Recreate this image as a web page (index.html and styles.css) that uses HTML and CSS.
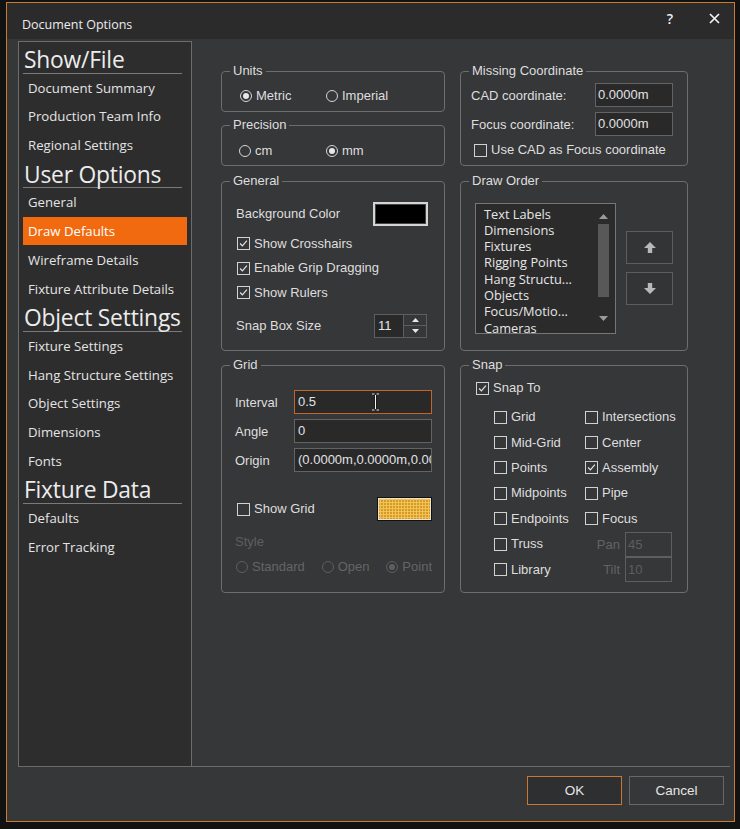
FILE: index.html
```html
<!DOCTYPE html>
<html>
<head>
<meta charset="utf-8">
<link rel="stylesheet" href="styles.css">
</head>
<body>
<div class="window">
  <div class="titlebar">
    <div class="title">Document Options</div>
    <div class="tb-btns">
      <span class="help">?</span>
      <svg class="close" width="11" height="11" viewBox="0 0 11 11"><path d="M1 1L10 10M10 1L1 10" stroke="#f2f2f2" stroke-width="1.7" fill="none"/></svg>
    </div>
  </div>

  <div class="main">
    <nav class="sidebar">
      <div class="sb-head">Show/File</div>
      <div class="sb-item">Document Summary</div>
      <div class="sb-item">Production Team Info</div>
      <div class="sb-item">Regional Settings</div>
      <div class="sb-head">User Options</div>
      <div class="sb-item">General</div>
      <div class="sb-item active">Draw Defaults</div>
      <div class="sb-item">Wireframe Details</div>
      <div class="sb-item">Fixture Attribute Details</div>
      <div class="sb-head">Object Settings</div>
      <div class="sb-item">Fixture Settings</div>
      <div class="sb-item">Hang Structure Settings</div>
      <div class="sb-item">Object Settings</div>
      <div class="sb-item">Dimensions</div>
      <div class="sb-item">Fonts</div>
      <div class="sb-head">Fixture Data</div>
      <div class="sb-item">Defaults</div>
      <div class="sb-item">Error Tracking</div>
    </nav>

    <section class="panel">
      <div class="col-stack">
        <div class="group g-units">
          <div class="gt">Units</div>
          <div class="radio-row units-row">
            <label class="radio w86"><span class="rb on"></span>Metric</label>
            <label class="radio"><span class="rb"></span>Imperial</label>
          </div>
        </div>
        <div class="group g-units">
          <div class="gt">Precision</div>
          <div class="radio-row prec-row">
            <label class="radio w87"><span class="rb"></span>cm</label>
            <label class="radio"><span class="rb on"></span>mm</label>
          </div>
        </div>
      </div>

      <div class="group">
        <div class="gt">Missing Coordinate</div>
        <div class="mc-body">
          <div class="field-row"><span>CAD coordinate:</span><span class="tb w78">0.0000m</span></div>
          <div class="field-row mt5"><span>Focus coordinate:</span><span class="tb w78">0.0000m</span></div>
          <label class="check mc-check"><span class="cb"></span>Use CAD as Focus coordinate</label>
        </div>
      </div>

      <div class="group">
        <div class="gt">General</div>
        <div class="gen-body">
          <div class="bg-row"><span>Background Color</span><span class="swatch-black"></span></div>
          <div class="gen-checks">
            <label class="check crow"><span class="cb on"><svg viewBox="0 0 13 13"><path d="M2.5 6.5L5.2 9.3L10.5 3.2" stroke="#e6e6e6" stroke-width="1.4" fill="none"/></svg></span>Show Crosshairs</label>
            <label class="check crow"><span class="cb on"><svg viewBox="0 0 13 13"><path d="M2.5 6.5L5.2 9.3L10.5 3.2" stroke="#e6e6e6" stroke-width="1.4" fill="none"/></svg></span>Enable Grip Dragging</label>
            <label class="check crow"><span class="cb on"><svg viewBox="0 0 13 13"><path d="M2.5 6.5L5.2 9.3L10.5 3.2" stroke="#e6e6e6" stroke-width="1.4" fill="none"/></svg></span>Show Rulers</label>
          </div>
          <div class="snapbox-row">
            <span>Snap Box Size</span>
            <div class="spinner">
              <span class="spin-val">11</span>
              <span class="spin-btns">
                <span class="spin-b"><svg width="7" height="4" viewBox="0 0 7 4"><path d="M0 4L3.5 0L7 4Z" fill="#e8e8e8"/></svg></span>
                <span class="spin-b"><svg width="7" height="4" viewBox="0 0 7 4"><path d="M0 0L3.5 4L7 0Z" fill="#e8e8e8"/></svg></span>
              </span>
            </div>
          </div>
        </div>
      </div>

      <div class="group">
        <div class="gt">Draw Order</div>
        <div class="do-body">
          <div class="listbox">
            <div class="lb-items">
              <div>Text Labels</div>
              <div>Dimensions</div>
              <div>Fixtures</div>
              <div>Rigging Points</div>
              <div>Hang Structu...</div>
              <div>Objects</div>
              <div>Focus/Motio...</div>
              <div>Cameras</div>
            </div>
            <div class="scroll">
              <svg width="9" height="5" viewBox="0 0 9 5"><path d="M0 5L4.5 0L9 5Z" fill="#9a9a9a"/></svg>
              <div class="thumb"></div>
              <svg width="9" height="5" viewBox="0 0 9 5"><path d="M0 0L4.5 5L9 0Z" fill="#9a9a9a"/></svg>
            </div>
          </div>
          <div class="order-btns">
            <div class="obtn"><svg width="12" height="11" viewBox="0 0 12 11"><path d="M6 0L12 6H8.2V11H3.8V6H0Z" fill="#b8b8b8"/></svg></div>
            <div class="obtn"><svg width="12" height="11" viewBox="0 0 12 11"><path d="M6 11L12 5H8.2V0H3.8V5H0Z" fill="#b8b8b8"/></svg></div>
          </div>
        </div>
      </div>

      <div class="group">
        <div class="gt">Grid</div>
        <div class="grid-body">
          <div class="gfield"><span class="glabel">Interval</span><span class="tb gtb focus">0.5<svg class="ibeam" width="9" height="18" viewBox="0 0 9 18"><path d="M1 1H3.5M5.5 1H8M4.5 2V16M1 17H3.5M5.5 17H8" stroke="#111" stroke-width="2.2" fill="none"/><path d="M1 1H3.5M5.5 1H8M4.5 2V16M1 17H3.5M5.5 17H8" stroke="#f4f4f4" stroke-width="1" fill="none"/></svg></span></div>
          <div class="gfield"><span class="glabel">Angle</span><span class="tb gtb">0</span></div>
          <div class="gfield"><span class="glabel">Origin</span><span class="tb gtb clip">(0.0000m,0.0000m,0.0000m)</span></div>
          <div class="showgrid-row">
            <label class="check"><span class="cb"></span>Show Grid</label>
            <span class="swatch-grid"></span>
          </div>
          <div class="style-label">Style</div>
          <div class="radio-row style-row">
            <label class="radio dis w86"><span class="rb"></span>Standard</label>
            <label class="radio dis w65"><span class="rb"></span>Open</label>
            <label class="radio dis"><span class="rb on"></span>Point</label>
          </div>
        </div>
      </div>

      <div class="group">
        <div class="gt">Snap</div>
        <div class="snap-body">
          <label class="check snapto"><span class="cb on"><svg viewBox="0 0 13 13"><path d="M2.5 6.5L5.2 9.3L10.5 3.2" stroke="#e6e6e6" stroke-width="1.4" fill="none"/></svg></span>Snap To</label>
          <div class="snap-grid">
            <label class="check"><span class="cb"></span>Grid</label>
            <label class="check"><span class="cb"></span>Intersections</label>
            <label class="check"><span class="cb"></span>Mid-Grid</label>
            <label class="check"><span class="cb"></span>Center</label>
            <label class="check"><span class="cb"></span>Points</label>
            <label class="check"><span class="cb on"><svg viewBox="0 0 13 13"><path d="M2.5 6.5L5.2 9.3L10.5 3.2" stroke="#e6e6e6" stroke-width="1.4" fill="none"/></svg></span>Assembly</label>
            <label class="check"><span class="cb"></span>Midpoints</label>
            <label class="check"><span class="cb"></span>Pipe</label>
            <label class="check"><span class="cb"></span>Endpoints</label>
            <label class="check"><span class="cb"></span>Focus</label>
            <label class="check"><span class="cb"></span>Truss</label>
            <div class="pt-row"><span class="dis-text">Pan</span><span class="tb ptb">45</span></div>
            <label class="check"><span class="cb"></span>Library</label>
            <div class="pt-row"><span class="dis-text">Tilt</span><span class="tb ptb">10</span></div>
          </div>
        </div>
      </div>
    </section>
  </div>

  <div class="footer">
    <div class="btn ok">OK</div>
    <div class="btn">Cancel</div>
  </div>
</div>
</body>
</html>
```

FILE: styles.css
```css
html, body {
  margin: 0;
  padding: 0;
}
body {
  background: #121212;
  width: 740px;
  height: 829px;
  overflow: hidden;
  font-family: "Liberation Sans", Arial, sans-serif;
  font-size: 13px;
  color: #dedede;
}
.window {
  margin: 2px 0 0 6px;
  width: 729px;
  height: 820px;
  box-sizing: border-box;
  border: 1px solid #c97b2f;
  background: #363739;
  display: flex;
  flex-direction: column;
}
.titlebar {
  height: 36px;
  flex: none;
  background: #2b2b2c;
  display: flex;
  justify-content: space-between;
  align-items: flex-start;
}
.title {
  font-family: "Open Sans", sans-serif;
  font-size: 12.5px;
  font-weight: 500;
  color: #ececec;
  margin: 13px 0 0 15px;
  line-height: 18px;
}
.tb-btns {
  display: flex;
  align-items: center;
  margin: 6px 14px 0 0;
  height: 18px;
}
.help {
  font-family: "Open Sans", sans-serif;
  font-size: 14px;
  font-weight: 600;
  color: #f0f0f0;
  margin-right: 36px;
}
.main {
  flex: none;
  height: 726px;
  box-sizing: border-box;
  margin: 2px 4px 0 11px;
  border-bottom: 1px solid #6a6a6a;
  display: flex;
}
.sidebar {
  width: 174px;
  flex: none;
  box-sizing: border-box;
  border: 1px solid #6c6c6c;
  border-bottom: none;
  background: #2d2d2e;
  padding-top: 3px;
  font-family: "Open Sans", sans-serif;
}
.sb-head {
  height: 28.7px;
  box-sizing: border-box;
  margin: 0 9px 0 4px;
  padding-left: 1px;
  border-bottom: 1px solid #7a7a7a;
  font-size: 22.8px;
  font-weight: 400;
  line-height: 29px;
  color: #ececec;
  letter-spacing: -0.2px;
  white-space: nowrap;
  overflow: visible;
}
.sb-item {
  height: 28.7px;
  box-sizing: border-box;
  margin: 0 4px;
  padding-left: 5px;
  font-size: 13.2px;
  font-weight: 500;
  line-height: 28.7px;
  color: #e4e4e4;
  white-space: nowrap;
}
.sb-item.active {
  background: #f26a10;
  color: #fff;
  height: 28px;
  line-height: 28px;
  margin-bottom: 0.7px;
}
.panel {
  flex: 1;
  padding: 30px 0 0 29px;
  display: grid;
  grid-template-columns: 224px 228px;
  grid-template-rows: 95px 170px 228px;
  column-gap: 15px;
  row-gap: 14.5px;
  align-content: start;
}
.col-stack {
  display: flex;
  flex-direction: column;
  gap: 13px;
}
.group {
  border: 1px solid #6d6d6d;
  border-radius: 4px;
  box-sizing: border-box;
}
.g-units {
  height: 41px;
}
.gt {
  margin: -8px 0 0 8px;
  padding: 0 3px;
  width: fit-content;
  height: 14px;
  line-height: 14px;
  background: #363739;
  color: #dedede;
}
.radio-row {
  display: flex;
  align-items: center;
  height: 16px;
}
.units-row { margin-top: 10px; padding-left: 18px; }
.prec-row { margin-top: 11px; padding-left: 17px; }
.radio {
  display: flex;
  align-items: center;
  gap: 4px;
  line-height: 16px;
}
.w86 { width: 86px; }
.w87 { width: 87px; }
.w65 { width: 65px; }
.rb {
  width: 12px;
  height: 12px;
  box-sizing: border-box;
  border: 1px solid #d6d6d6;
  border-radius: 50%;
  display: flex;
  align-items: center;
  justify-content: center;
  flex: none;
}
.rb.on::after {
  content: "";
  width: 6px;
  height: 6px;
  border-radius: 50%;
  background: #e8e8e8;
}
.radio.dis { color: #656565; }
.radio.dis .rb { border-color: #5e5e5e; }
.radio.dis .rb.on::after { background: #5e5e5e; }
.check {
  display: flex;
  align-items: center;
  gap: 4px;
  height: 16px;
  line-height: 16px;
  white-space: nowrap;
}
.cb {
  width: 13px;
  height: 13px;
  box-sizing: border-box;
  border: 1px solid #d2d2d2;
  flex: none;
  display: block;
}
.cb svg {
  display: block;
  width: 11px;
  height: 11px;
}
.tb {
  box-sizing: border-box;
  height: 24px;
  border: 1px solid #636363;
  background: #29292a;
  line-height: 22px;
  padding-left: 2px;
  color: #e2e2e2;
  display: block;
  white-space: nowrap;
}
.w78 { width: 78px; }
.mc-body {
  padding: 5px 14px 0 10px;
}
.field-row {
  display: flex;
  justify-content: space-between;
  align-items: center;
  height: 24px;
}
.mt5 { margin-top: 5px; }
.mc-check { margin: 6px 0 0 3px; }
.gen-body {
  padding: 14px 16px 0 14px;
}
.bg-row {
  display: flex;
  justify-content: space-between;
  align-items: center;
  height: 24px;
}
.swatch-black {
  width: 55px;
  height: 24px;
  box-sizing: border-box;
  border: 2px solid #d4d4d4;
  background: #000;
  box-shadow: inset 0 0 0 1px #444;
}
.gen-checks {
  margin-top: 6px;
  padding-left: 1px;
}
.crow {
  height: 24.5px;
}
.snapbox-row {
  margin-top: 8.5px;
  display: flex;
  justify-content: space-between;
  align-items: center;
  height: 24px;
  padding-right: 1px;
}
.spinner {
  display: flex;
  height: 24px;
}
.spin-val {
  width: 30px;
  box-sizing: border-box;
  border: 1px solid #5e5e5e;
  background: #29292a;
  line-height: 22px;
  padding-left: 3px;
  color: #e6e6e6;
}
.spin-btns {
  width: 23px;
  box-sizing: border-box;
  border: 1px solid #5e5e5e;
  border-left: none;
  display: flex;
  flex-direction: column;
}
.spin-b {
  flex: 1;
  display: flex;
  align-items: center;
  justify-content: center;
}
.spin-b + .spin-b {
  border-top: 1px solid #5e5e5e;
}
.do-body {
  display: flex;
  padding: 15px 0 0 14px;
  gap: 10px;
}
.listbox {
  width: 141px;
  height: 131px;
  box-sizing: border-box;
  border: 1px solid #767676;
  background: #2b2b2c;
  display: flex;
  overflow: hidden;
}
.lb-items {
  flex: 1;
  padding: 2px 0 0 8px;
  font-family: "Open Sans", sans-serif;
  font-size: 12.8px;
  font-weight: 500;
  line-height: 16.3px;
  color: #e6e6e6;
  overflow: hidden;
  white-space: nowrap;
}
.scroll {
  width: 14px;
  margin-right: 5px;
  display: flex;
  flex-direction: column;
  align-items: center;
  padding-top: 10px;
}
.thumb {
  width: 11px;
  height: 73px;
  background: #585858;
  margin: 5px 0 19px;
}
.order-btns {
  margin-top: 28px;
  display: flex;
  flex-direction: column;
  gap: 8px;
}
.obtn {
  width: 47px;
  height: 33px;
  box-sizing: border-box;
  border: 1px solid #5d5d5d;
  background: #333436;
  display: flex;
  align-items: center;
  justify-content: center;
}
.grid-body {
  padding: 18px 12px 0 13px;
}
.gfield {
  display: flex;
  align-items: center;
  height: 24px;
  margin-bottom: 5px;
}
.glabel {
  width: 59px;
}
.gtb {
  width: 138px;
  overflow: hidden;
  padding-left: 3px;
  position: relative;
}
.gtb.focus {
  border-color: #c2652a;
}
.ibeam {
  position: absolute;
  left: 76px;
  top: 2px;
}
.showgrid-row {
  margin-top: 25px;
  display: flex;
  justify-content: space-between;
  align-items: center;
  height: 24px;
  padding-left: 2px;
}
.swatch-grid {
  width: 55px;
  height: 24px;
  box-sizing: border-box;
  border: 1px solid #111;
  box-shadow: inset 0 0 0 1px #e6e2d6;
  background-color: #d99a22;
  background-image:
    repeating-linear-gradient(90deg, transparent 0 2px, #f0c35a 2px 3px),
    repeating-linear-gradient(0deg, transparent 0 2px, #f0c35a 2px 3px);
}
.style-label {
  margin-top: 13px;
  height: 16px;
  line-height: 16px;
  color: #5f5f5f;
}
.style-row {
  margin-top: 9px;
  padding-left: 1px;
}
.snap-body {
  padding: 8px 0 0 15px;
}
.snap-grid {
  margin-top: 8.5px;
  padding-left: 18px;
  display: grid;
  grid-template-columns: 91px 87px;
  grid-auto-rows: 25.4px;
  align-items: center;
}
.pt-row {
  display: flex;
  justify-content: flex-end;
  align-items: center;
  gap: 5px;
}
.dis-text { color: #636363; }
.ptb {
  width: 47px;
  height: 25px;
  background: transparent;
  border-color: #5e5e5e;
  color: #5e5e5e;
  line-height: 23px;
}
.footer {
  display: flex;
  justify-content: flex-end;
  gap: 7px;
  margin-top: 9px;
  padding-right: 10px;
}
.btn {
  width: 95px;
  height: 29px;
  box-sizing: border-box;
  border: 1px solid #676767;
  background: #363739;
  text-align: center;
  line-height: 27px;
  font-size: 13.5px;
  color: #e6e6e6;
}
.btn.ok {
  border-color: #c8782f;
  background: #2e2f31;
}
```
